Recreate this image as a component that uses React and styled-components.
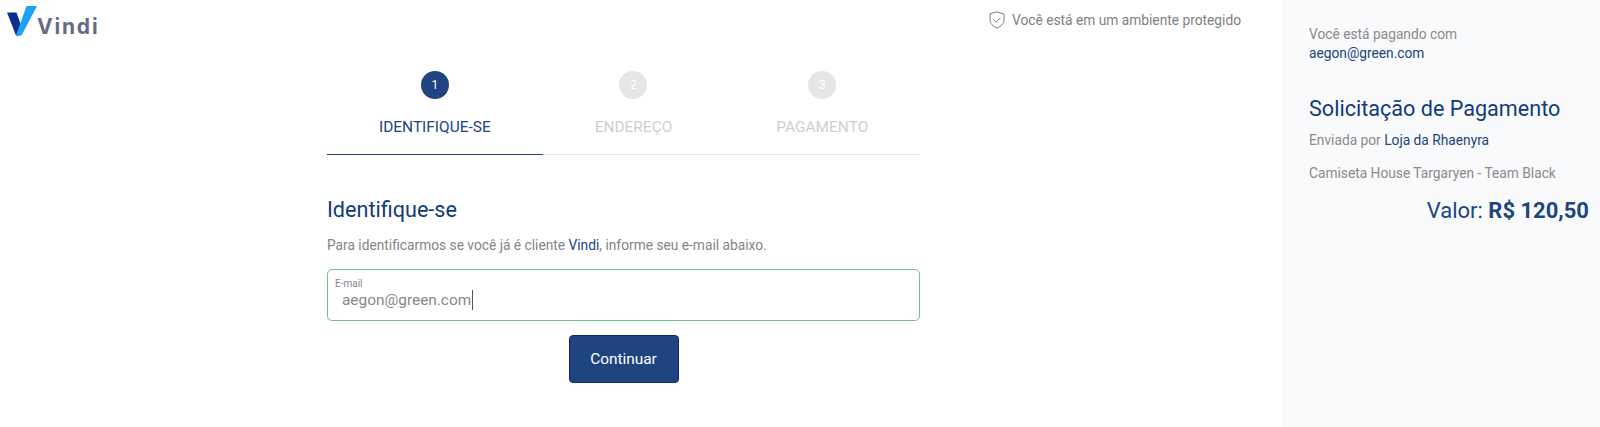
import React from 'react';
import styled, { createGlobalStyle } from 'styled-components';

const GlobalStyle = createGlobalStyle`
  html, body {
    margin: 0;
    padding: 0;
    background: #fff;
    font-family: Roboto, "Liberation Sans", sans-serif;
  }
  * { box-sizing: border-box; }
`;

const Page = styled.div`
  display: flex;
  width: 1600px;
  height: 427px;
  overflow: hidden;
`;

const Main = styled.main`
  flex: 1;
  min-width: 0;
`;

const TopBar = styled.header`
  display: flex;
  justify-content: space-between;
  height: 71px;
  padding: 6px 41px 0 7px;
`;

const Logo = styled.div`
  display: flex;
  align-items: flex-start;
  height: 32px;
`;

const LogoText = styled.span`
  margin: 8px 0 0 0;
  font-family: Inter, Roboto, sans-serif;
  font-size: 21px;
  line-height: 26px;
  font-weight: 700;
  letter-spacing: 1.8px;
  color: #666a80;
`;

const SafeNotice = styled.div`
  display: flex;
  align-items: center;
  gap: 7px;
  height: 28px;
  font-size: 13.76px;
  color: #7f7f7f;
`;

const FormColumn = styled.section`
  width: 593px;
  margin-left: 327px;
`;

const Steps = styled.ol`
  display: flex;
  margin: 0;
  padding: 0;
  list-style: none;
  height: 84px;
`;

const Step = styled.li`
  display: flex;
  flex-direction: column;
  align-items: center;
  padding: 0 52px;
  border-bottom: 1px solid ${p => (p.$active ? '#20447f' : '#e6e6e6')};
  flex-grow: ${p => (p.$last ? 1 : 0)};
`;

const StepDot = styled.span`
  display: flex;
  align-items: center;
  justify-content: center;
  width: 28px;
  height: 28px;
  border-radius: 50%;
  font-size: 12px;
  color: #fff;
  background: ${p => (p.$active ? '#20447f' : '#e6e6e6')};
`;

const StepLabel = styled.span`
  margin-top: 18px;
  font-size: 15.45px;
  line-height: 20px;
  white-space: nowrap;
  color: ${p => (p.$active ? '#20447f' : '#cfcfcf')};
`;

const Title = styled.h2`
  margin: 41px 0 0;
  font-size: 21.6px;
  line-height: 28px;
  font-weight: 400;
  color: #123a7c;
`;

const Hint = styled.p`
  margin: 11px 0 0;
  font-size: 13.76px;
  line-height: 20px;
  color: #858585;
`;

const Highlight = styled.span`
  color: #20447f;
`;

const Field = styled.label`
  display: block;
  height: 52px;
  margin-top: 14px;
  padding: 8px 7px 0;
  border: 1px solid #6cc486;
  border-radius: 5px;
`;

const FieldLabel = styled.span`
  display: block;
  font-size: 10px;
  line-height: 12px;
  color: #85858f;
`;

const FieldValue = styled.span`
  display: inline-block;
  margin-left: 7px;
  padding-right: 1px;
  border-right: 1px solid #555;
  font-size: 15.4px;
  line-height: 20px;
  color: #888;
`;

const Actions = styled.div`
  display: flex;
  justify-content: center;
  margin-top: 14px;
`;

const Button = styled.button`
  width: 110px;
  height: 48px;
  border: 1px solid #0b2a74;
  border-radius: 4px;
  background: #20447f;
  color: #fff;
  font-family: inherit;
  font-size: 15.4px;
  font-weight: 400;
`;

const Sidebar = styled.aside`
  width: 318px;
  padding: 25px 11px 0 27px;
  background: #f9fafc;
`;

const Muted = styled.p`
  margin: 0;
  font-size: 13.76px;
  line-height: 19px;
  color: #8a8a8a;
`;

const PayerEmail = styled.p`
  margin: 0;
  font-size: 13.76px;
  line-height: 19px;
  color: #20447f;
`;

const RequestTitle = styled.h1`
  margin: 32px 0 0;
  font-size: 21.6px;
  line-height: 28px;
  font-weight: 400;
  color: #123a7c;
`;

const SentBy = styled.p`
  margin: 7px 0 0;
  font-size: 13.76px;
  line-height: 20px;
  color: #8a8a8a;
`;

const Product = styled(Muted)`
  margin-top: 14px;
`;

const Amount = styled.p`
  margin: 15px 0 0;
  text-align: right;
  font-size: 22px;
  line-height: 26px;
  color: #20447f;

  strong {
    font-weight: 700;
  }
`;

const VindiMark = () => (
  <svg width="30" height="30" viewBox="0 0 30 30">
    <path d="M0 6.500h9.500L15 22l-2.500 7.500H9Z" fill="#0b2f8f" />
    <path d="M19.500 0H30L14.500 29.500H9Z" fill="#1ea0f5" />
  </svg>
);

const ShieldIcon = () => (
  <svg width="16" height="18" viewBox="0 0 16 18" fill="none" stroke="#7b7b7b" strokeWidth="1" strokeLinejoin="round" strokeLinecap="round">
    <path d="M8 1 15 3.200V9c0 3.600-3 6.400-7 8C4 15.400 1 12.600 1 9V3.200Z" />
    <path d="M5 9l2.200 2.200L11.200 7" />
  </svg>
);

const steps = [
  { n: 1, label: 'IDENTIFIQUE-SE', active: true },
  { n: 2, label: 'ENDEREÇO' },
  { n: 3, label: 'PAGAMENTO' },
];

export default function App() {
  return (
    <Page>
      <GlobalStyle />
      <Main>
        <TopBar>
          <Logo>
            <VindiMark />
            <LogoText>Vindi</LogoText>
          </Logo>
          <SafeNotice>
            <ShieldIcon />
            Você está em um ambiente protegido
          </SafeNotice>
        </TopBar>
        <FormColumn>
          <Steps>
            {steps.map(s => (
              <Step key={s.n} $active={s.active} $last={s.n === 3}>
                <StepDot $active={s.active}>{s.n}</StepDot>
                <StepLabel $active={s.active}>{s.label}</StepLabel>
              </Step>
            ))}
          </Steps>
          <Title>Identifique-se</Title>
          <Hint>
            Para identificarmos se você já é cliente <Highlight>Vindi</Highlight>, informe seu e-mail abaixo.
          </Hint>
          <Field>
            <FieldLabel>E-mail</FieldLabel>
            <FieldValue>aegon@green.com</FieldValue>
          </Field>
          <Actions>
            <Button>Continuar</Button>
          </Actions>
        </FormColumn>
      </Main>
      <Sidebar>
        <Muted>Você está pagando com</Muted>
        <PayerEmail>aegon@green.com</PayerEmail>
        <RequestTitle>Solicitação de Pagamento</RequestTitle>
        <SentBy>
          Enviada por <Highlight>Loja da Rhaenyra</Highlight>
        </SentBy>
        <Product>Camiseta House Targaryen - Team Black</Product>
        <Amount>
          Valor: <strong>R$ 120,50</strong>
        </Amount>
      </Sidebar>
    </Page>
  );
}
